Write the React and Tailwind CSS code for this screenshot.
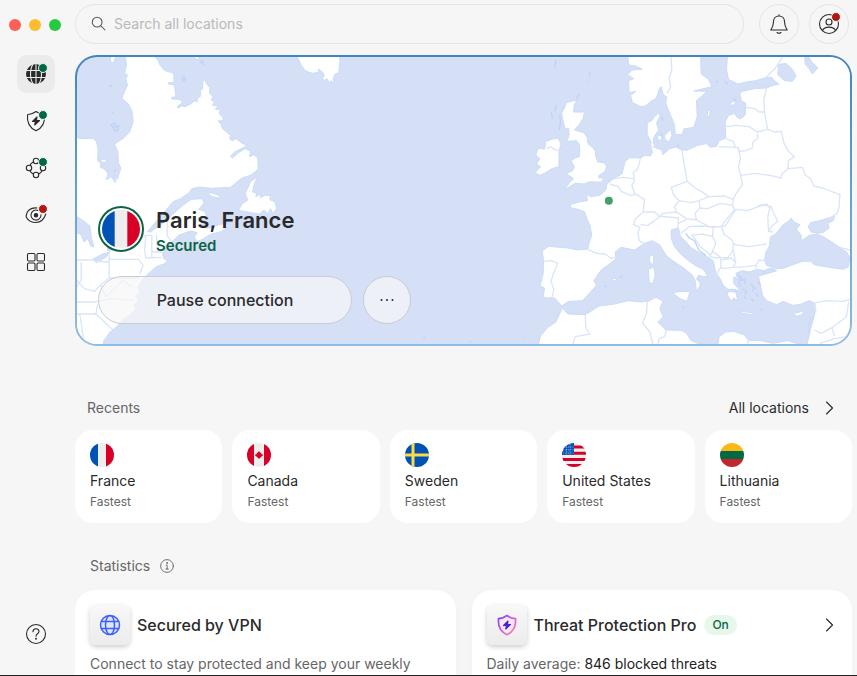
import React from "react";

const LAND = [
  // Eastern Canada and the United States
  "M150 0L156 45L150 70L159 75L154 88L159 105L150 125L142 145L160 160L172 182L176 215L166 245L145 266L120 282L130 305L132 340L139 355L128 388L120 375L124 399L110 380L95 389L101 372L90 357L78 352L79 340L69 331L71 300L66 275L55 265L15 266L0 256V900H85L88 872L105 848L125 832L150 805L165 795L185 778L178 766L192 752L184 738L198 728L190 712L205 688L220 672L232 662L245 650L268 642L280 632L268 626L264 612L276 590L296 572L312 556L334 548L350 543L368 548L360 560L366 575L384 568L410 552L440 545L462 528L455 519L430 525L400 535L386 530L378 510L396 500L392 485L372 478L388 460L384 446L350 448L325 466L300 488L262 522L228 546L219 545L240 520L275 480L296 455L318 446L342 430L352 416L375 411L410 415L468 412L485 398L502 384L530 375L551 358L550 324L538 314L525 320L528 304L512 296L492 308L474 324L468 319L480 306L518 287L500 278L485 266L474 272L465 266L468 256L452 243L443 234L440 222L430 213L446 212L445 200L434 192L438 180L423 178L430 168L414 166L420 155L411 151L414 139L405 129L406 113L396 101L389 86L385 96L384 116L377 124L379 138L369 144L368 156L361 152L348 162L332 170L320 168L312 175L308 170L325 156L314 148L292 147L292 142L304 141L302 120L298 104L282 102L282 98L298 98L298 70L270 61L257 46L250 30L240 20L235 0Z",
  // Newfoundland
  "M548 380L538 408L534 425L546 430L544 440L560 431L556 443L572 436L588 436L586 449L602 456L606 476L596 490L588 476L580 492L568 480L555 492L530 488L492 481L502 462L520 450L512 432L528 395Z",
  "M398 425L420 431L438 438L434 444L412 440Z M76 328L92 328L98 336L84 338Z M108 0L122 0L122 25L115 40L108 33Z M350 0L362 26L374 30L366 0Z",
  // Greenland
  "M668 0L670 25L680 45L692 62L702 66L713 70L732 67L731 57L744 66L750 78L742 84L750 91L758 86L764 98L770 92L779 103L776 86L782 72L793 68L796 35V0Z",
  // Great Britain and Ireland
  "M1475 158L1492 153L1508 152L1500 162L1498 178L1497 186L1530 186L1526 205L1514 224L1500 240L1528 248L1538 262L1540 280L1554 292L1562 302L1564 318L1570 336L1590 338L1596 350L1590 366L1574 376L1572 383L1590 385L1578 397L1545 395L1530 402L1502 400L1485 410L1470 418L1488 394L1498 386L1475 371L1494 362L1500 350L1490 334L1500 325L1514 320L1516 300L1514 282L1506 272L1477 274L1484 254L1482 234L1472 238L1468 222L1464 206L1462 188L1470 174Z",
  "M1390 295L1410 297L1414 274L1432 268L1450 264L1460 282L1454 302L1453 350L1432 356L1412 369L1396 376L1382 368L1398 350L1386 342L1396 326L1384 314Z",
  "M1440 170L1450 158L1446 172Z M1541 85L1546 80L1543 98Z",
  // Norway and Sweden
  "M1658 0L1663 45L1684 48L1703 58L1672 60L1660 74L1678 86L1662 92L1664 128L1684 124L1668 136L1674 158L1700 170L1712 168L1730 154L1746 144L1754 118L1760 110L1766 134L1776 140L1774 160L1785 188L1800 224L1802 253L1822 254L1828 237L1858 232L1868 200L1866 152L1898 124L1858 123L1912 110L1902 88L1880 72L1878 0Z",
  // Zealand, Funen, Oland and Gotland
  "M1770 256L1790 238L1792 256L1784 276L1772 270Z M1748 258L1762 256L1762 270L1750 270Z M1900 182L1908 180L1904 202L1898 196Z M1968 158L1984 152L1980 164L1968 166Z M1974 144L1985 140L1984 147Z",
  // Mainland Europe, Turkey and the Levant
  "M1960 0L1956 60L1962 88L1990 102L2020 95L2044 92L2078 82L2092 82L2102 94L2114 103L2096 106L2076 114L2040 116L2004 124L1996 130L2000 152L2014 160L2012 195L1998 207L1988 202L1980 190L1962 196L1952 216L1954 264L1934 272L1926 289L1908 292L1896 281L1870 286L1836 301L1822 300L1804 291L1784 297L1765 314L1762 300L1744 294L1736 278L1738 262L1752 240L1746 218L1756 200L1754 188L1740 200L1732 212L1718 218L1718 254L1730 276L1728 290L1734 306L1728 318L1712 316L1698 324L1666 323L1652 334L1642 372L1620 384L1597 402L1594 420L1576 436L1550 440L1536 433L1539 452L1514 456L1486 464L1489 473L1510 478L1530 485L1538 508L1546 524L1552 556L1544 578L1540 597L1510 600L1480 594L1422 589L1403 604L1407 630L1406 672L1396 708L1410 714L1406 743L1440 744L1462 768L1480 755L1524 752L1546 728L1566 706L1558 692L1580 660L1624 628L1622 606L1640 592L1680 600L1710 580L1734 572L1756 585L1776 618L1806 640L1830 656L1854 676L1862 692L1866 726L1877 706L1876 696L1866 688L1872 676L1888 680L1900 678L1886 658L1862 646L1842 632L1820 614L1800 590L1790 565L1790 540L1812 534L1818 560L1836 576L1848 592L1874 608L1898 620L1916 632L1924 668L1938 688L1946 706L1960 718L1980 718L1994 723L1980 726L1962 724L1958 734L1970 752L1978 744L1990 752L1983 722L2000 726L1978 700L1978 680L1990 688L1984 670L2004 662L2026 666L2048 658L2068 662L2092 654L2106 662L2074 672L2052 678L2058 708L2064 736L2076 752L2106 764L2126 754L2154 766L2178 763L2204 752L2218 758L2220 795L2208 838L2194 900H2400V0Z",
  // Italian and Spanish islands
  "M1726 618L1737 614L1738 636L1732 645L1725 632Z M1722 658L1738 651L1742 675L1736 700L1724 698Z M1794 728L1820 724L1846 725L1838 754L1816 746Z M1612 688L1622 684L1626 690L1618 694Z",
  // Crete and Cyprus
  "M1996 785L2016 786L2040 790L2032 794L2004 790Z M2156 790L2176 786L2190 780L2182 794L2168 799Z",
  // North Africa
  "M1388 900L1398 858L1420 832L1444 816L1456 790L1464 774L1480 792L1532 794L1574 768L1620 762L1660 752L1700 756L1724 753L1744 742L1766 753L1756 776L1766 800L1750 816L1774 840L1820 841L1836 850L1850 872L1880 884L1930 882L1934 860L1954 846L1976 844L2008 854L2024 872L2060 872L2094 880L2140 872L2180 884L2190 900Z",
];

const WATER = [
  // Black Sea, Azov, Marmara
  "M2098 653L2076 646L2070 632L2074 606L2084 590L2088 560L2104 552L2124 526L2144 512L2150 504L2158 516L2176 524L2166 538L2180 556L2182 572L2204 556L2226 552L2250 562L2278 580L2316 606L2326 622L2322 650L2306 658L2250 650L2220 644L2208 634L2184 634L2150 646L2128 654L2106 656Z",
  "M2201 530L2208 518L2236 512L2280 498L2276 512L2260 520L2264 534L2248 546L2232 550L2210 546Z",
  "M2062 666L2082 656L2104 662L2080 670Z",
  // Ladoga and Onega
  "M2112 44L2134 40L2152 56L2165 78L2154 94L2130 92L2110 74Z M2190 0L2212 36L2230 54L2214 72L2204 56L2192 42Z",
  // Great Lakes
  "M0 496L24 510L46 528L50 560L58 590L50 590L40 566L28 576L20 554L0 546Z M54 628L84 612L106 606L94 622L66 638Z M98 594L140 584L130 596L100 602Z",
  "M2210 800L2206 830L2202 852L2200 834Z",
];

const BORDERS = [
  // North American states
  "M6 630H60M20 636V690L0 720M64 634L104 636V600M104 636V684L78 706L60 724L30 716L6 690M104 628H192L206 646L196 672M104 684H190M0 756H60L110 746L180 752M70 760L64 792L116 840M6 792H64M16 792L30 888M142 596L184 572L214 556L232 556V622M214 556L210 600L214 624L262 622M246 556L250 606L280 582M278 502L278 556L290 574M232 606H264M80 706L94 740L120 716L146 690L170 710",
  // Norway–Sweden, Finland–Russia, the Baltics
  "M1788 0L1792 60L1784 84L1788 110L1778 130M2124 22L2100 58L2076 80M2076 114L2068 150L2070 186L2080 240M2014 172L2040 176L2054 186L2070 186M1952 230L1986 226L2024 230L2048 246L2080 238M2048 250L2050 264L2034 278L2034 294L2014 302L1996 304L1990 292L1932 290M1954 266L1976 274L1982 290M2080 238L2100 246L2120 244L2128 278L2142 304L2160 320L2142 332L2140 356L2122 372L2120 384L2086 376L2040 370L1998 376M2140 356L2184 352L2192 374L2208 386L2218 408L2244 414L2296 434L2294 470L2288 490L2262 508",
  // Poland, Czechia, Slovakia, Hungary
  "M1990 292L1998 324L1992 350L1998 376L2004 404L1984 432L1976 448L1950 438L1904 440L1880 424L1862 414L1838 394L1822 300M1838 394L1790 412L1798 436L1814 452L1850 458L1874 452L1904 440M1874 452L1876 474L1900 476L1938 460L1974 466L1976 448M1974 466L1980 480L1962 500L1940 530L1904 530L1866 510L1862 490L1876 474M1814 452L1800 470L1806 486L1764 490L1756 500M1806 486L1836 506L1866 510",
  // Low Countries, France, Alps, Iberia
  "M1698 324L1690 356L1676 368L1680 392L1672 406L1680 430L1710 448L1706 486L1682 508L1678 524L1696 532L1690 550L1694 572L1712 582M1618 386L1644 382L1676 386M1606 402L1632 410L1640 424L1668 436L1682 434M1706 486L1740 486L1756 500L1740 512L1720 526L1698 524M1750 498L1812 504L1810 536M1540 598L1566 610L1592 612L1608 624L1624 622M1406 634L1430 632L1450 640L1436 672L1430 694L1438 720L1432 742M1812 520L1836 508M1728 290L1742 292M1416 296L1430 290L1438 298L1454 302",
  // Balkans, Romania, Ukraine
  "M1820 550L1844 530L1880 528L1904 530L1916 532L1940 530L1952 528L1972 496L1984 478L2020 482L2046 472L2076 462L2086 474L2080 500L2082 544L2096 546M2048 470L2062 464L2090 470L2098 490L2110 514L2092 528L2084 542M1942 532L1948 552L1972 570L1980 584L2024 590L2076 582M1916 532L1914 560L1924 580L1914 604L1938 622L1960 624L1976 600L1976 580M1850 556L1884 552L1916 560M1852 554L1876 588L1908 616M1914 604L1906 620L1924 624L1938 622L1940 650L1924 676M1942 630L1970 624L1984 638L1976 652L1946 656L1938 650M1976 600L1984 640M1980 652L2016 650L2044 646L2054 630L2076 632M2044 646L2046 662",
  // Middle East and North Africa
  "M2222 758L2260 752L2304 754L2330 748M2222 758L2224 790M2220 840L2240 850L2274 832L2316 800L2322 756M2236 880L2280 866L2330 858M2272 832L2280 858M2296 592L2334 602M1532 794L1534 834L1546 852L1502 860L1494 888M1718 756L1716 790L1704 818L1726 846L1736 888M1776 840L1770 860L1754 866L1750 888M2020 870V888",
];

const ISLETS =
  "M104 112l8-6M114 186l2 4M110 225l10-6l4 12l8-4l-2 12l-10 4l-2-10zM120 360l4 4M376 40l8-8l3 14M322 86l6-6l5 6l-5 6zM1430 186l4 20M1456 196l2 24l-4 20M1446 166l-6 18M1514 132l-8 16M1544 76l4-10M1444 28l-2 24M1834 550l10 14l16 8l14 30l20 14M1990 676l10 6l-4 10l14-4l2 14M2004 716l12 10l-4 8M2028 700l12 14l-6 10M2044 730l8 10M2030 746l8 8M2010 740l4 8M1992 698l6 10M2050 696l8 8M2060 776l2 8M1924 98l6-6M1950 94l10 8M1976 150l8-4M1636 682l8-4M1590 708l6 2M1824 770l5 4M1760 200l6 12M1760 250l4 12M1808 288l6-2M1186 875l4 0M1046 862l6 1M1350 862l3 1";

function WorldMap() {
  return (
    <svg
      viewBox="6 21 2322 861"
      preserveAspectRatio="xMidYMid slice"
      className="absolute inset-0 h-full w-full"
      aria-hidden="true"
    >
      <rect x="-200" y="-200" width="2800" height="1300" fill="#d5dff6" />
      <g fill="#fff" stroke="#c9dcfa" strokeWidth="3" strokeLinejoin="round">
        {LAND.map((d) => (
          <path key={d} d={d} />
        ))}
      </g>
      <g fill="#d5dff6" stroke="#c9dcfa" strokeWidth="3" strokeLinejoin="round">
        {WATER.map((d) => (
          <path key={d} d={d} />
        ))}
      </g>
      <g fill="none" stroke="#dae5f9" strokeWidth="4" strokeLinejoin="round">
        {BORDERS.map((d) => (
          <path key={d} d={d} />
        ))}
      </g>
      <path d={ISLETS} fill="none" stroke="#bcd3f8" strokeWidth="4" />
      <circle cx="1603" cy="452" r="12" fill="#46a066" />
    </svg>
  );
}

function Flag({ country, className }) {
  return (
    <svg viewBox="0 0 24 24" className={`rounded-full ${className}`} aria-hidden="true">
      {country === "France" && (
        <>
          <path fill="#eee" d="M0 0h24v24H0z" />
          <path fill="#0052b4" d="M0 0h8v24H0z" />
          <path fill="#d80027" d="M16 0h8v24h-8z" />
        </>
      )}
      {country === "Canada" && (
        <>
          <path fill="#eee" d="M0 0h24v24H0z" />
          <path fill="#d80027" d="M0 0h7v24H0zM17 0h7v24h-7zM12 8l1.200 1.800 1.200-.4-.3 1.800 1.700-.5-.5 1.200.8.6-2.600 1.700v.8h-1.100V16h-.8v-1h-1.100v-.8l-2.600-1.700.8-.6-.5-1.200 1.700.5-.3-1.800 1.200.4z" />
        </>
      )}
      {country === "Sweden" && (
        <>
          <path fill="#0052b4" d="M0 0h24v24H0z" />
          <path fill="#ffda44" d="M6.5 0h3v24h-3zM0 10.5h24v3H0z" />
        </>
      )}
      {country === "United States" && (
        <>
          <path fill="#eee" d="M0 0h24v24H0z" />
          <path fill="#d80027" d="M0 2.5h24v3H0zM0 8.7h24v3H0zM0 14.9h24v3H0zM0 21h24v3H0z" />
          <path fill="#0052b4" d="M0 0h12v11.8H0z" />
          <path stroke="#9dbbe2" strokeWidth=".9" strokeDasharray="1.2 1.2" d="M1 4h10.500M1 7h10.500M1 10h10.500M4.500 1v10.500M8 1v10.500" />
        </>
      )}
      {country === "Lithuania" && (
        <>
          <path fill="#fdb913" d="M0 0h24v8H0z" />
          <path fill="#006a44" d="M0 8h24v8H0z" />
          <path fill="#c1272d" d="M0 16h24v8H0z" />
        </>
      )}
    </svg>
  );
}

function Icon({ children, className = "h-6 w-6", ...rest }) {
  return (
    <svg
      viewBox="0 0 24 24"
      fill="none"
      stroke="currentColor"
      strokeWidth="1.1"
      strokeLinecap="round"
      strokeLinejoin="round"
      className={className}
      aria-hidden="true"
      {...rest}
    >
      {children}
    </svg>
  );
}

const NAV = [
  {
    label: "VPN",
    active: true,
    dot: "#006845",
    icon: (
      <>
        <circle cx="12" cy="12" r="10" fill="currentColor" stroke="none" />
        <path stroke="#ebebeb" d="M1 8.500h22M1 15.500h22M12 1v22M9.500 1.500C5.500 7 5.500 17 9.500 22.500M14.500 1.500C18.500 7 18.500 17 14.500 22.500" />
      </>
    ),
  },
  {
    label: "Threat Protection",
    dot: "#006845",
    icon: (
      <>
        <path d="M12 2.500C9 4.700 6.500 5.500 3.500 5.700C2.800 13 5.500 18.800 12 21.700C18.500 18.800 21.200 13 20.500 5.700C17.500 5.500 15 4.700 12 2.500Z" />
        <path fill="currentColor" d="M13 8L8.500 12.500h2.800L10.700 16L15.500 11.500h-3z" />
      </>
    ),
  },
  {
    label: "Meshnet",
    dot: "#006845",
    icon: (
      <>
        <circle cx="12" cy="5" r="2.700" />
        <circle cx="12" cy="19" r="2.700" />
        <circle cx="5" cy="12" r="2.700" />
        <circle cx="19" cy="12" r="2.700" />
        <path d="M9.300 6Q7 7 6 9.300M14.700 6Q17 7 18 9.300M9.300 18Q7 17 6 14.700M14.700 18Q17 17 18 14.700" />
      </>
    ),
  },
  {
    label: "Dark Web Monitor",
    dot: "#b3160f",
    icon: (
      <>
        <path d="M13 5C7 4.200 2.300 7.500 2.200 14C4 17.500 7.500 19.500 12 19.500C16.500 19.500 20 16.500 21.800 11" />
        <path d="M14 7.500A5 5 0 1 0 17 11.800" />
        <circle cx="12" cy="12.300" r="1.700" fill="currentColor" />
      </>
    ),
  },
  {
    label: "All products",
    icon: (
      <>
        <rect x="3.500" y="3.500" width="7.500" height="7.500" rx="1.200" />
        <rect x="13" y="3.500" width="7.500" height="7.500" rx="1.200" />
        <rect x="3.500" y="13" width="7.500" height="7.500" rx="1.200" />
        <rect x="13" y="13" width="7.500" height="7.500" rx="1.200" />
      </>
    ),
  },
];

function Sidebar() {
  return (
    <aside className="flex w-[75px] shrink-0 flex-col items-center pr-1 pb-[22px]">
      <div className="flex h-[55px] w-full items-center gap-2 pb-1.5 pl-[9px]">
        <button aria-label="Close" className="h-3 w-3 rounded-full bg-[#fe5f57]" />
        <button aria-label="Minimize" className="h-3 w-3 rounded-full bg-[#febc2e]" />
        <button aria-label="Zoom" className="h-3 w-3 rounded-full bg-[#28c840]" />
      </div>
      <nav className="flex flex-col gap-[9px]">
        {NAV.map((item) => (
          <button
            key={item.label}
            aria-label={item.label}
            className={`flex h-[38px] w-[38px] items-center justify-center rounded-[10px] ${item.active ? "bg-[#ebebeb]" : ""}`}
          >
            <Icon>
              {item.icon}
              {item.dot && (
                <circle cx="19" cy="6" r="4.500" fill={item.dot} stroke={item.active ? "#ebebeb" : "#f6f6f6"} strokeWidth="1" />
              )}
            </Icon>
          </button>
        ))}
      </nav>
      <button aria-label="Help" className="mt-auto flex h-[38px] w-[38px] items-center justify-center">
        <Icon>
          <circle cx="12" cy="12" r="9.500" />
          <path d="M9 9.800C9 5.800 15 5.900 15 9.500C15 11.700 12 11.800 12 14.200" />
          <circle cx="12" cy="16.700" r=".4" fill="currentColor" />
        </Icon>
      </button>
    </aside>
  );
}

function Header() {
  return (
    <header className="flex h-[55px] items-start pt-1 pr-[3px]">
      <label className="flex h-10 flex-1 items-center gap-1.5 rounded-full border border-[#e4e4e4] px-[14px]">
        <Icon className="h-[18px] w-[18px] text-[#555]" strokeWidth="1.4">
          <circle cx="9.500" cy="9.500" r="6.500" />
          <path d="M14.200 14.200L20 20" />
        </Icon>
        <input
          type="search"
          aria-label="Search all locations"
          placeholder="Search all locations"
          className="min-w-0 flex-1 bg-transparent text-sm outline-none placeholder:text-[#b9b9b9]"
        />
      </label>
      <button aria-label="Notifications" className="ml-[15px] flex h-10 w-10 items-center justify-center rounded-full border border-[#e4e4e4]">
        <Icon>
          <path d="M12 2.800V4M12 4C8.500 4 6.500 6.500 6.500 9.500C6.500 13.500 5.500 15.500 3.800 18H20.200C18.500 15.500 17.500 13.500 17.500 9.500C17.500 6.500 15.500 4 12 4ZM10 20.500Q12 22 14 20.500" />
        </Icon>
      </button>
      <button aria-label="Account" className="ml-[10px] flex h-10 w-10 items-center justify-center rounded-full border border-[#e4e4e4]">
        <Icon className="h-6 w-6 overflow-visible">
          <circle cx="12" cy="12" r="9.500" />
          <circle cx="12" cy="10" r="3" />
          <path d="M5.500 18.500C7.500 14 16.500 14 18.500 18.500" />
          <circle cx="19" cy="5" r="4.500" fill="#b3160f" stroke="#f6f6f6" strokeWidth="1" />
        </Icon>
      </button>
    </header>
  );
}

function Hero() {
  return (
    <section className="rounded-[22px] bg-linear-to-b from-[#3f86bd] to-[#90bde3] p-[2px]">
      <div className="relative flex h-[287px] flex-col justify-end overflow-hidden rounded-[20px] px-[21px] pb-5">
        <WorldMap />
        <div className="relative flex items-start gap-3">
          <div className="h-[46px] w-[46px] rounded-full border-2 border-[#0b6443] bg-white p-[2px]">
            <Flag country="France" className="h-[38px] w-[38px]" />
          </div>
          <div>
            <h1 className="text-[22px] leading-7 font-semibold">Paris, France</h1>
            <p className="text-[15px] leading-6 font-semibold text-[#0b6443]">Secured</p>
          </div>
        </div>
        <div className="relative mt-[18px] flex gap-[11px]">
          <button className="h-12 w-[254px] rounded-full border border-[#c9ccd3] bg-[#f6f6f6]/70 text-base font-medium">
            Pause connection
          </button>
          <button aria-label="More options" className="flex h-12 w-12 items-center justify-center rounded-full border border-[#c9ccd3] bg-[#f6f6f6]/70">
            <Icon fill="currentColor" stroke="none">
              <circle cx="6.500" cy="12" r="1" />
              <circle cx="12" cy="12" r="1" />
              <circle cx="17.500" cy="12" r="1" />
            </Icon>
          </button>
        </div>
      </div>
    </section>
  );
}

function Chevron() {
  return (
    <Icon className="h-6 w-6">
      <path d="M9.500 6L15.500 12L9.500 18" />
    </Icon>
  );
}

const RECENTS = ["France", "Canada", "Sweden", "United States", "Lithuania"];

function Recents() {
  return (
    <section className="mt-[50px]">
      <div className="flex h-6 items-center justify-between pr-[11px] pl-3">
        <h2 className="text-sm text-[#666]">Recents</h2>
        <a href="#locations" className="flex items-center gap-2 text-sm">
          All locations
          <Chevron />
        </a>
      </div>
      <div className="mt-[10px] grid grid-cols-5 gap-[10px]">
        {RECENTS.map((country) => (
          <button key={country} className="flex flex-col items-start rounded-[18px] bg-white px-[15px] pt-[13px] pb-[13px] text-left">
            <Flag country={country} className="h-6 w-6" />
            <span className="mt-1 text-sm">{country}</span>
            <span className="mt-[3px] text-xs text-[#666]">Fastest</span>
          </button>
        ))}
      </div>
    </section>
  );
}

function Badge({ children }) {
  return (
    <div className="flex h-10 w-10 items-center justify-center rounded-md bg-linear-to-b from-[#f8f8f8] to-[#ececec] shadow-[0_2px_5px_rgba(0,0,0,0.2)]">
      {children}
    </div>
  );
}

function Statistics() {
  return (
    <section className="mt-[31px]">
      <div className="flex h-6 items-center gap-2 pl-[15px]">
        <h2 className="text-sm text-[#666]">Statistics</h2>
        <button aria-label="About statistics" className="text-[#555]">
          <Icon className="h-[18px] w-[18px]">
            <circle cx="12" cy="12" r="8.500" />
            <path d="M11 10.800h1.200V16M10.500 16h3.300" />
            <circle cx="12" cy="8" r=".5" fill="currentColor" />
          </Icon>
        </button>
      </div>
      <div className="mt-3 grid grid-cols-2 gap-4">
        <article className="rounded-[20px] bg-white px-[15px] pt-[15px] pb-9 shadow-[0_0_8px_rgba(0,0,0,0.02)]">
          <div className="flex items-center gap-[7px]">
            <Badge>
              <Icon stroke="#3e5fff" strokeWidth="1.500">
                <circle cx="12" cy="12" r="9.500" fill="#dce6ff" />
                <ellipse cx="12" cy="12" rx="4.500" ry="9.500" />
                <path d="M3.500 8.500h17M3.500 15.500h17" />
              </Icon>
            </Badge>
            <h3 className="text-base font-medium">Secured by VPN</h3>
          </div>
          <p className="mt-[9px] text-sm text-[#666]">Connect to stay protected and keep your weekly</p>
        </article>
        <article className="rounded-[20px] bg-white px-[15px] pt-[15px] pb-9 shadow-[0_0_8px_rgba(0,0,0,0.02)]">
          <div className="flex items-center gap-[7px]">
            <Badge>
              <Icon>
                <defs>
                  <linearGradient id="shield" x1="0" x2="1" y1="0" y2="1">
                    <stop offset="0" stopColor="#6c4bff" />
                    <stop offset=".5" stopColor="#d45bd8" />
                    <stop offset="1" stopColor="#ff8a9a" />
                  </linearGradient>
                </defs>
                <path
                  stroke="url(#shield)"
                  strokeWidth="1.700"
                  fill="#fbe6f5"
                  d="M12 2.500C9 4.700 6.500 5.500 3.500 5.700C2.800 13 5.500 18.800 12 21.700C18.500 18.800 21.200 13 20.500 5.700C17.500 5.500 15 4.700 12 2.500Z"
                />
                <path fill="#4a24c8" stroke="#4a24c8" d="M13 8L8.500 12.500h2.800L10.700 16L15.500 11.500h-3z" />
              </Icon>
            </Badge>
            <h3 className="text-base font-medium">Threat Protection Pro</h3>
            <span className="ml-px rounded-full bg-[#e8f7ec] px-2 py-0.5 text-xs font-medium text-[#0b6443]">On</span>
            <a href="#threats" aria-label="Open Threat Protection Pro" className="-mr-1 ml-auto">
              <Chevron />
            </a>
          </div>
          <p className="mt-[9px] text-sm text-[#666]">
            Daily average: <span className="text-[#222]">846 blocked threats</span>
          </p>
        </article>
      </div>
    </section>
  );
}

export default function App() {
  return (
    <div className="flex h-screen overflow-hidden border-b border-[#222] bg-[#f6f6f6] font-[Inter,'Liberation_Sans',sans-serif] text-[#2a2a2c]">
      <Sidebar />
      <main className="min-w-0 flex-1 overflow-hidden pr-[5px]">
        <Header />
        <Hero />
        <Recents />
        <Statistics />
      </main>
    </div>
  );
}
